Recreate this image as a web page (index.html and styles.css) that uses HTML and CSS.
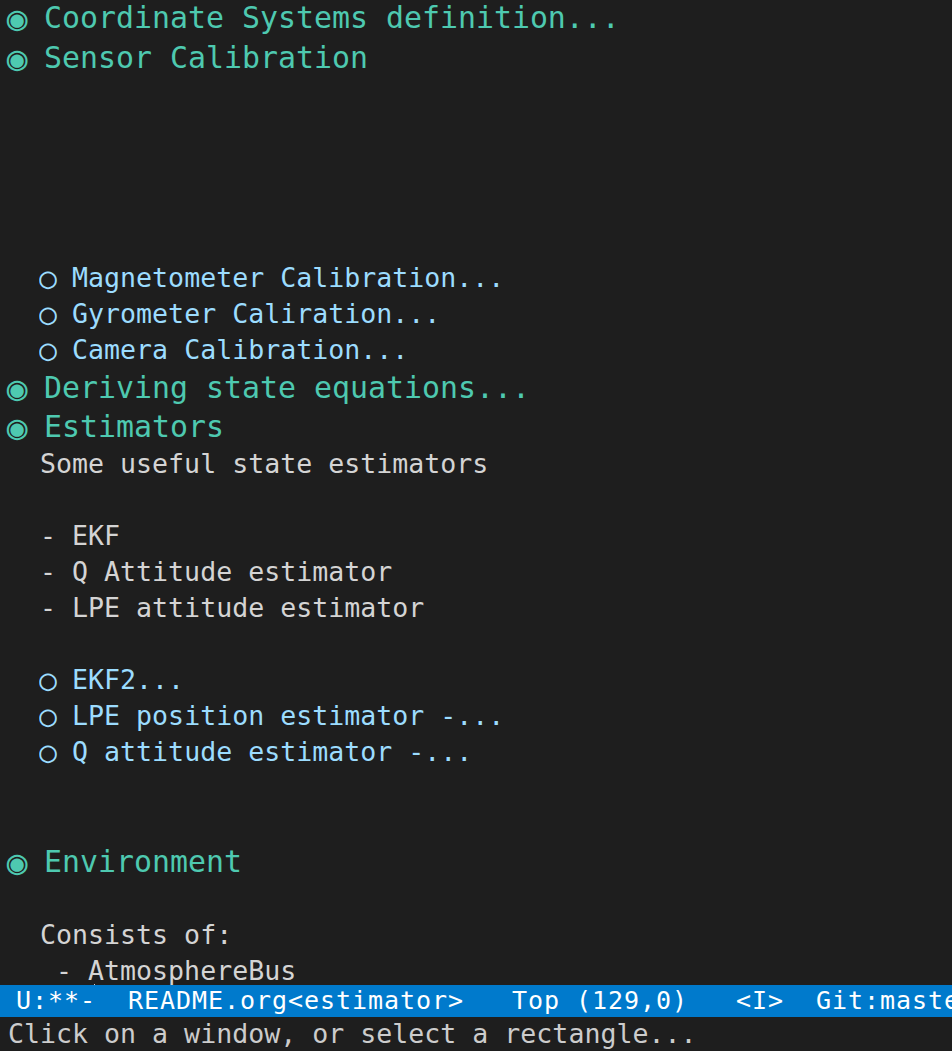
FILE: index.html
```html
<!DOCTYPE html>
<html lang="en">
<head>
<meta charset="utf-8">
<title>README.org - Emacs</title>
<link rel="stylesheet" href="styles.css">
</head>
<body>
<div class="frame">
  <div class="buffer">
    <div class="line heading first"><span class="star">◉</span> Coordinate Systems definition...</div>
    <div class="line heading"><span class="star">◉</span> Sensor Calibration</div>
    <div class="image-gap"></div>
    <div class="line sub">  <span class="star">○</span> Magnetometer Calibration...</div>
    <div class="line sub">  <span class="star">○</span> Gyrometer Caliration...</div>
    <div class="line sub">  <span class="star">○</span> Camera Calibration...</div>
    <div class="line heading"><span class="star">◉</span> Deriving state equations...</div>
    <div class="line heading"><span class="star">◉</span> Estimators</div>
    <div class="line text">  Some useful state estimators</div>
    <div class="line text"></div>
    <div class="line text">  - EKF</div>
    <div class="line text">  - Q Attitude estimator</div>
    <div class="line text">  - LPE attitude estimator</div>
    <div class="line text"></div>
    <div class="line sub">  <span class="star">○</span> EKF2...</div>
    <div class="line sub">  <span class="star">○</span> LPE position estimator -...</div>
    <div class="line sub">  <span class="star">○</span> Q attitude estimator -...</div>
    <div class="line text"></div>
    <div class="line text"></div>
    <div class="line heading"><span class="star">◉</span> Environment</div>
    <div class="line text"></div>
    <div class="line text">  Consists of:</div>
    <div class="line text cursor-line">   - AtmosphereBus<span class="cursor"></span></div>
  </div>
  <div class="modeline"> U:**-  README.org&lt;estimator&gt;   Top (129,0)   &lt;I&gt;  Git:master</div>
  <div class="minibuffer">Click on a window, or select a rectangle...</div>
</div>
</body>
</html>
```

FILE: styles.css
```css
html, body {
  margin: 0;
  padding: 0;
  background: #1e1e1e;
}

.frame {
  width: 952px;
  height: 1051px;
  overflow: hidden;
  display: flex;
  flex-direction: column;
  background: #1e1e1e;
  font-family: "DejaVu Sans Mono", monospace;
}

.buffer {
  height: 985px;
  flex: 0 0 985px;
  overflow: hidden;
  padding-left: 8px;
  box-sizing: border-box;
}

.line {
  white-space: pre;
  font-size: 26.6px;
  height: 36px;
  line-height: 36px;
  color: #d4d4d4;
  position: relative;
}

.star {
  display: inline-block;
  transform: scale(1.1);
}

.heading {
  font-size: 29.9px;
  height: 39px;
  line-height: 39px;
  color: #4ec9b0;
}

.heading .star {
  transform: scale(1.15);
}

.heading.first {
  height: 37.5px;
  line-height: 36px;
}

.sub {
  color: #9cdcfe;
}

.text {
  color: #d4d4d4;
}

.image-gap {
  height: 183px;
  flex: none;
}

.cursor-line .cursor {
  position: absolute;
  left: 86px;
  top: 31px;
  width: 1px;
  height: 6px;
  background: #cfcfcf;
}

.modeline {
  flex: 0 0 32px;
  height: 32px;
  line-height: 32px;
  background: #007acc;
  color: #ffffff;
  font-size: 25px;
  letter-spacing: 0.95px;
  white-space: pre;
  overflow: hidden;
}

.minibuffer {
  flex: 0 0 34px;
  height: 34px;
  line-height: 34px;
  padding-left: 8px;
  color: #cccccc;
  font-size: 26.6px;
  white-space: pre;
  overflow: hidden;
}
```
